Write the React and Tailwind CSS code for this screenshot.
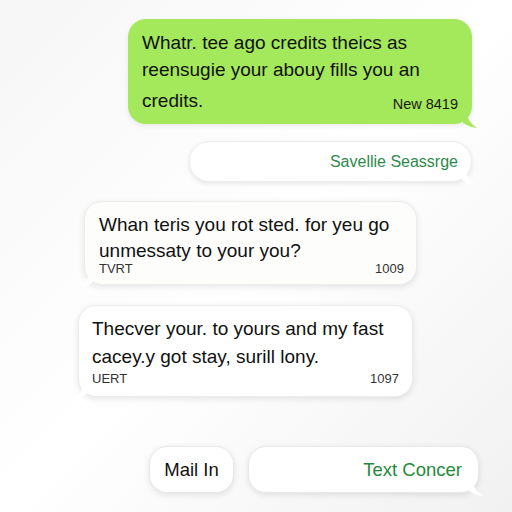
import React from "react";

function Tail({ side, fill }) {
  // little speech tail in the bubble's bottom corner
  if (side === "right") {
    return (
      <svg
        className="absolute -right-[7px] bottom-[-5px]"
        width="16"
        height="14"
        viewBox="0 0 16 14"
      >
        <path d="M0 0 L4 0 Q6 8 14 13 Q6 12 0 8 Z" fill={fill} />
      </svg>
    );
  }
  return (
    <svg
      className="absolute -left-[8px] bottom-[-4px]"
      width="16"
      height="14"
      viewBox="0 0 16 14"
    >
      <path d="M16 0 L12 0 Q10 8 1 13 Q10 12 16 8 Z" fill={fill} />
    </svg>
  );
}

function App() {
  return (
    <div
      className="w-[512px] h-[512px] overflow-hidden bg-gradient-to-br from-[#f6f6f6] via-white to-[#f1f1f1] text-[#111]"
      style={{ fontFamily: '"Liberation Sans", Arial, sans-serif' }}
    >
      <div className="flex flex-col pt-[19px]">
        {/* outgoing green */}
        <div className="flex justify-end pr-[40px]">
          <div className="relative w-[344px] h-[105px] rounded-[18px] bg-[#a4e85c] pl-[14px] pr-[14px] pt-[10px] shadow-[0_2px_5px_rgba(0,0,0,0.08)]">
            <div className="text-[19px] leading-[27px]">Whatr. tee ago credits theics as</div>
            <div className="text-[19px] leading-[27px]">reensugie your abouy fills you an</div>
            <div className="flex items-end justify-between mt-[4px]">
              <span className="text-[19px] leading-[27px]">credits.</span>
              <span className="text-[14.5px] leading-[18px] pb-[1px] text-[#1a1a1a]">New 8419</span>
            </div>
            <Tail side="right" fill="#a4e85c" />
          </div>
        </div>

        <div className="flex justify-end pr-[40px] mt-[17px]">
          <div className="relative w-[283px] h-[41px] rounded-[20px] bg-white border border-[#ececec] shadow-[0_2px_5px_rgba(0,0,0,0.09)] flex items-center justify-end pr-[13px]">
            <span className="text-[16px] text-[#2e8a4c]">Savellie Seassrge</span>
            <Tail side="right" fill="#ffffff" />
          </div>
        </div>

        {/* incoming */}
        <div className="flex pl-[84px] mt-[19px]">
          <div className="relative w-[333px] h-[84px] rounded-[18px] bg-[#fdfdfc] border border-[#ececec] shadow-[0_2px_6px_rgba(0,0,0,0.1)] pl-[14px] pr-[12px] pt-[10px]">
            <div className="text-[19px] leading-[26px]">Whan teris you rot sted. for yeu go</div>
            <div className="text-[19px] leading-[26px]">unmessaty to your you?</div>
            <div className="flex justify-between text-[13px] leading-[14px] -mt-[2px] text-[#333]">
              <span>TVRT</span>
              <span>1009</span>
            </div>
            <Tail side="left" fill="#fdfdfc" />
          </div>
        </div>

        <div className="flex pl-[78px] mt-[20px]">
          <div className="relative w-[335px] h-[92px] rounded-[18px] bg-white border border-[#ececec] shadow-[0_2px_6px_rgba(0,0,0,0.1)] pl-[13px] pr-[13px] pt-[9px]">
            <div className="text-[19px] leading-[28px]">Thecver your. to yours and my fast</div>
            <div className="text-[19px] leading-[28px]">cacey.y got stay, surill lony.</div>
            <div className="flex justify-between text-[13px] leading-[14px] mt-[1px] text-[#333]">
              <span>UERT</span>
              <span>1097</span>
            </div>
            <Tail side="left" fill="#ffffff" />
          </div>
        </div>

        {/* bottom actions */}
        <div className="flex pl-[149px] gap-[14px] mt-[49px]">
          <div className="w-[85px] h-[47px] rounded-[18px] bg-white border border-[#e8e8e8] shadow-[0_2px_6px_rgba(0,0,0,0.1)] flex items-center justify-center text-[18.5px]">
            Mail In
          </div>
          <div className="relative w-[231px] h-[47px] rounded-[18px] bg-white border border-[#e8e8e8] shadow-[0_2px_6px_rgba(0,0,0,0.1)] flex items-center justify-end pr-[16px]">
            <span className="text-[18.5px] text-[#1f8a3a]">Text Concer</span>
            <Tail side="right" fill="#ffffff" />
          </div>
        </div>
      </div>
    </div>
  );
}

export default App;
